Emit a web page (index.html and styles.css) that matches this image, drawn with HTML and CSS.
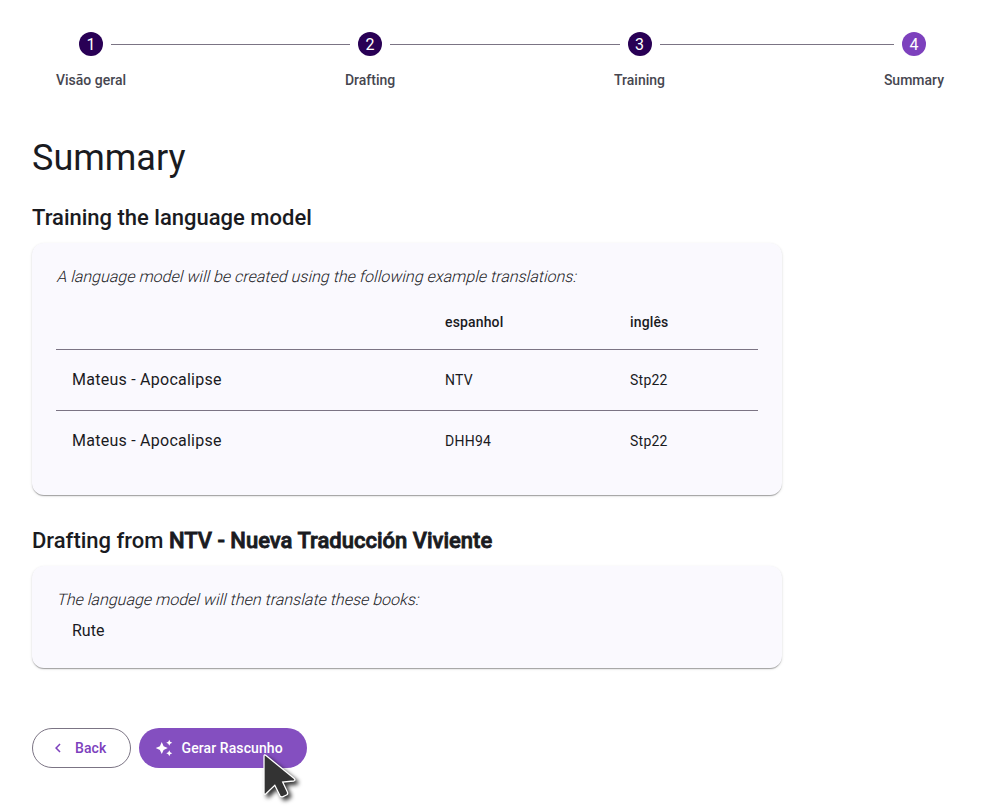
FILE: index.html
```html
<!DOCTYPE html>
<html lang="pt">
<head>
<meta charset="utf-8">
<title>Summary</title>
<link rel="stylesheet" href="styles.css">
</head>
<body>
<nav class="stepper">
  <div class="step"><div class="step-track"><span class="step-icon">1</span></div><div class="step-label">Visão geral</div></div>
  <div class="step-line"></div>
  <div class="step"><div class="step-track"><span class="step-icon">2</span></div><div class="step-label">Drafting</div></div>
  <div class="step-line"></div>
  <div class="step"><div class="step-track"><span class="step-icon">3</span></div><div class="step-label">Training</div></div>
  <div class="step-line"></div>
  <div class="step"><div class="step-track"><span class="step-icon current">4</span></div><div class="step-label">Summary</div></div>
</nav>
<main class="content">
  <h1 class="page-title">Summary</h1>
  <h2 class="section-title">Training the language model</h2>
  <section class="card training">
    <p class="intro">A language model will be created using the following example translations:</p>
    <table class="sources">
      <thead><tr><th class="range"></th><th class="source">espanhol</th><th>inglês</th></tr></thead>
      <tbody>
        <tr><td class="books">Mateus - Apocalipse</td><td>NTV</td><td>Stp22</td></tr>
        <tr><td class="books">Mateus - Apocalipse</td><td>DHH94</td><td>Stp22</td></tr>
      </tbody>
    </table>
  </section>
  <h2 class="section-title draft-title">Drafting from <span class="strong">NTV - Nueva Traducción Viviente</span></h2>
  <section class="card drafting">
    <p class="intro">The language model will then translate these books:</p>
    <p class="book-list">Rute</p>
  </section>
  <div class="actions">
    <button class="button back"><svg class="icon" viewBox="0 0 24 24"><path d="M15.41 7.41 14 6l-6 6 6 6 1.41-1.41L10.83 12z"/></svg>Back</button>
    <button class="button generate"><svg class="icon" viewBox="0 0 24 24"><path d="m19 9 1.25-2.75L23 5l-2.75-1.25L19 1l-1.25 2.75L15 5l2.75 1.25zm0 6-1.25 2.75L15 19l2.75 1.25L19 23l1.25-2.75L23 19l-2.75-1.25zm-7.5-5.500L9 4 6.500 9.500 1 12l5.500 2.500L9 20l2.500-5.500L17 12z"/></svg>Gerar Rascunho</button>
  </div>
</main>
<svg class="cursor" viewBox="0 0 44 54"><path d="M6 5.500Q4 3.800 4 6.500V42.500Q4 45.500 6.200 43.500L14.800 35.300L20 45.800Q21 47.500 23 46.600L26.500 45Q28.300 44 27.500 42.200L22.700 32L33.600 31Q36 30.500 34.200 28.500Z"/></svg>
</body>
</html>
```

FILE: styles.css
```css
* { box-sizing: border-box; }
body {
  margin: 0;
  height: 810px;
  overflow: hidden;
  background: #fff;
  color: #1a1b1f;
  font-family: Roboto, sans-serif;
}
h1, h2, p { margin: 0; }

.stepper { display: flex; padding: 32px 32px 0; }
.step { flex: none; }
.step-track { display: flex; align-items: center; }
.step-track::before, .step-track::after { content: ""; flex: 1; height: 1px; margin-top: 1px; background: #7b7484; }
.step:first-child .step-track::before, .step:last-child .step-track::after { visibility: hidden; }
.step-icon {
  width: 24px;
  height: 24px;
  margin: 0 8px;
  border-radius: 50%;
  background: #290055;
  color: #fff;
  font-size: 16px;
  line-height: 25px;
  text-align: center;
}
.step-icon.current { background: #7d41bd; }
.step-label {
  padding: 14px 24px 0;
  color: #46464f;
  font-size: 14px;
  font-weight: 500;
  line-height: 20px;
}
.step-line { flex: 1; height: 1px; margin-top: 12px; background: #7b7484; }

.content { padding: 44px 32px 0; }
.page-title { font-size: 36px; font-weight: 400; line-height: 48px; }
.section-title { margin-top: 22px; font-size: 22px; font-weight: 500; line-height: 28px; }
.draft-title { margin-top: 32px; }
.strong { -webkit-text-stroke: .8px currentColor; }
.card {
  width: 750px;
  margin-top: 11px;
  padding: 24px;
  border-radius: 12px;
  background: #faf9fe;
  box-shadow: 0 2px 1px -1px rgba(0,0,0,.2), 0 1px 1px rgba(0,0,0,.14), 0 1px 3px rgba(0,0,0,.12);
}
.training { height: 252px; }
.drafting { height: 102px; }
.intro {
  font-size: 16px;
  font-weight: 300;
  line-height: 20px;
  transform: skewX(-14deg);
  transform-origin: 0 16px;
}
.sources { width: 702px; table-layout: fixed; border-collapse: collapse; font-size: 14px; line-height: 20px; letter-spacing: .25px; }
.sources th, .sources td { padding: 0 16px; text-align: left; }
.sources th { height: 62px; padding-top: 9px; font-weight: 500; letter-spacing: .15px; }
.sources td { height: 61px; border-top: 1px solid #7b7484; }
.sources .range { width: 373px; }
.sources .source { width: 185px; }
.sources .books { font-size: 16px; letter-spacing: .25px; }
.book-list { padding: 11px 16px 0; font-size: 16px; line-height: 20px; }

.actions { display: flex; gap: 8px; margin-top: 60px; }
.button {
  display: flex;
  align-items: center;
  height: 40px;
  border-radius: 20px;
  font: 500 14px/20px Roboto, sans-serif;
  letter-spacing: .1px;
}
.icon { width: 18px; height: 18px; margin-right: 8px; fill: currentColor; }
.back { width: 99px; padding: 0 0 0 16px; border: 1px solid #7b7484; background: #fff; color: #7d41bd; }
.generate { width: 168px; padding: 0 0 0 16px; border: 0; background: #844fc0; color: #fff; }
.generate .icon { margin-right: 8.5px; }
.cursor {
  position: absolute;
  left: 259.5px;
  top: 750px;
  width: 44px;
  height: 54px;
  fill: #333;
  stroke: #fff;
  stroke-width: 1.3;
  filter: drop-shadow(3px 3px 2px rgba(0,0,0,.8));
}
```
